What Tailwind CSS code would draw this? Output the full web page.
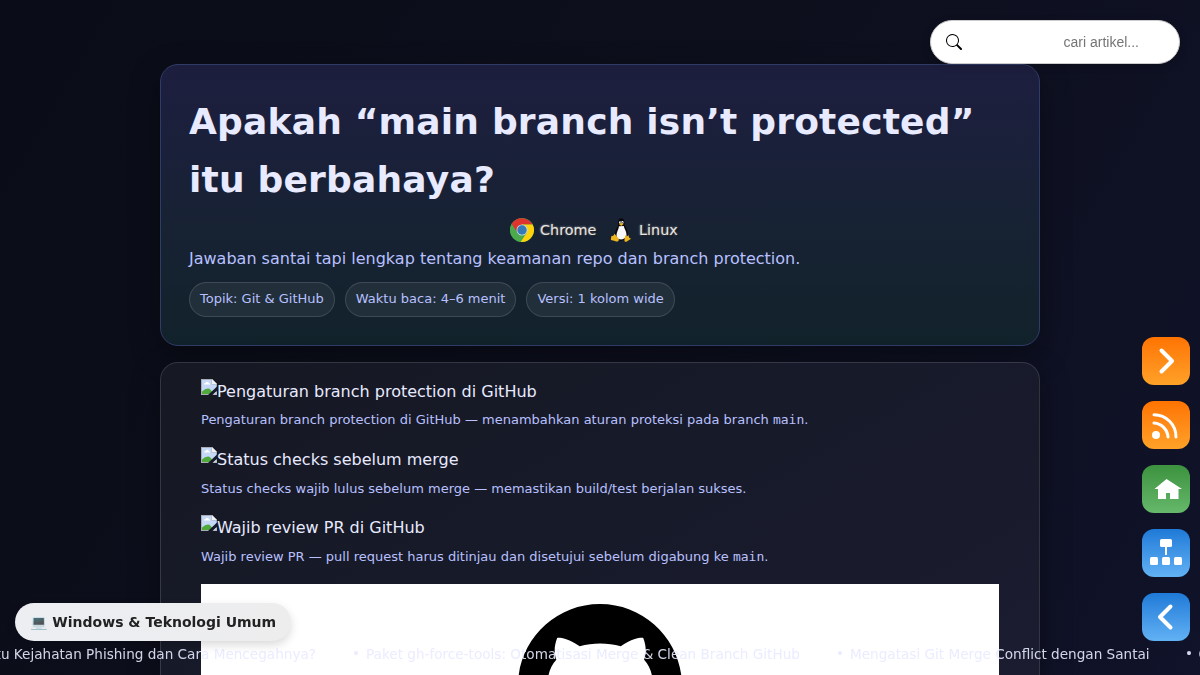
<!DOCTYPE html>
<html lang="id">
<head>
<meta charset="utf-8">
<title>Apakah “main branch isn’t protected” itu berbahaya?</title>
<script src="https://cdn.jsdelivr.net/npm/@tailwindcss/browser@4"></script>
</head>
<body class="h-[675px] overflow-hidden bg-[linear-gradient(120deg,#0a0d17_0%,#0d0f1d_50%,#101329_100%)] font-['DejaVu_Sans',sans-serif] text-base leading-[25.6px] text-[#e8eaff]">
<svg class="hidden">
  <defs>
    <symbol id="broken" viewBox="0 0 16 16">
      <path d="M0 0H11L16 5V16H0Z" fill="#a9adb5"/>
      <path d="M1 1H10.5V5.5H15V15H1Z" fill="#c5d9f7"/>
      <path d="M11 0L16 5H11Z" fill="#f1f2f4"/>
      <path d="M3 5.5q0-1.5 1.5-1.5q.5-1.5 2-1.2q1.300 .2 1.300 1.400q1.200 0 1.200 1.300z" fill="#fff"/>
      <path d="M1 15v-2.500q3-3 6-3q3 0 5 5.500z" fill="#4fa93b"/>
      <path d="M16 7.500L7 16h4.500L16 12z" fill="#171a29"/>
      <path d="M12 15.500l3.500-3.300v3.300z" fill="#c9ced6"/>
    </symbol>
  </defs>
</svg>
<main class="mx-auto flex h-[675px] w-[880px] flex-col gap-4 overflow-visible pt-16">
  <header class="h-[282px] shrink-0 rounded-[18px] border border-[#303c68] bg-[linear-gradient(180deg,#1d1e3e_0%,#1a203a_30%,#172233_58%,#12222b_100%)] p-7 shadow-[0_10px_30px_rgba(0,0,0,0.35)]">
    <h1 class="text-[36px] leading-[57.6px] font-bold tracking-[0.2px]">Apakah “main branch isn’t protected” itu berbahaya?</h1>
    <div class="mt-[10px] flex h-6 items-center pl-[321px] text-[14.4px] text-[#e4e4e4] [text-shadow:1px_1px_2px_#000,0_0_2px_#ddd]">
      <svg class="mr-1.5 size-6" viewBox="0 0 24 24">
        <circle cx="12" cy="12" r="12" fill="#46a348"/>
        <path d="M12 12L1.600 6A12 12 0 0 1 22.400 6.500L12 6.500Z" fill="#dd342d"/>
        <path d="M12 6.500H22.600A12 12 0 0 1 10.500 23.900L16.800 14.700Z" fill="#fed30c"/>
        <path d="M1.600 6L7.200 14.800L12 12V6.500Z" fill="#dd342d"/>
        <path d="M1.600 6L7.200 14.800L9 17L14.500 16.500L10.500 23.900A12 12 0 0 1 1.600 6" fill="#4aaa4c"/>
        <circle cx="12" cy="12" r="5.500" fill="#c9d9e3"/>
        <circle cx="12" cy="12" r="4.700" fill="#347ab7"/>
      </svg>
      <span class="w-[57px] pt-0.5">Chrome</span>
      <svg class="mr-1.5 ml-[12px] size-6" viewBox="0 0 24 24">
        <path d="M12.300.3C10 .3 9 2 9.200 4.400C9.400 7.500 8.600 8.500 7.300 11C6 13.500 5.500 17 6.500 19.500L12 23L17.500 20C20 16 18.500 12 16.300 8.500C15 6.500 15.500 5.500 15.300 3.500C15 1.300 14 .3 12.300.3Z" fill="#090909"/>
        <path d="M9.900 8.200L14.800 8C15.300 11 17.800 13 17.500 18C16 22 9.500 22.500 8 19.500C6.400 15 9.700 12 9.900 8.200Z" fill="#f8f8f8"/>
        <ellipse cx="11" cy="4.400" rx=".9" ry="1.200" fill="#fff"/><ellipse cx="13.400" cy="4.400" rx="1.100" ry="1.300" fill="#fff"/>
        <circle cx="11.200" cy="4.600" r=".45"/><circle cx="13.200" cy="4.600" r=".5"/>
        <path d="M10 6L12 5.100L14.600 6L12.200 7.900Z" fill="#f2b718"/>
        <path d="M5.600 15.700L9.800 21C10 24 7.800 24 6 23.100L2 22.100C1.600 21 2.400 20 2.200 18.300L4.300 17.700Z" fill="#efb51d"/>
        <path d="M16.200 17C17 18.600 18.700 18.500 19.500 17.100L20 19.500L22 20.700L17.500 23.700C15.300 24.200 15.200 22.500 15.700 20.500Z" fill="#efb51d"/>
      </svg>
      <span class="pt-0.5">Linux</span>
    </div>
    <p class="mt-[4px] text-[#b8c0ff]">Jawaban santai tapi lengkap tentang keamanan repo dan branch protection.</p>
    <div class="mt-[10px] flex gap-[10px] text-[13px] leading-[20.8px] text-[#b8c0ff]">
      <span class="h-[35px] rounded-full border border-white/13 bg-white/6 px-[10px] pt-[6px]">Topik: Git &amp; GitHub</span>
      <span class="h-[35px] rounded-full border border-white/13 bg-white/6 px-[10px] pt-[6px]">Waktu baca: 4–6 menit</span>
      <span class="h-[35px] rounded-full border border-white/13 bg-white/6 px-[10px] pt-[6px]">Versi: 1 kolom wide</span>
    </div>
  </header>
  <article class="h-[313px] shrink-0 rounded-t-[18px] border border-b-0 border-white/12 bg-[linear-gradient(150deg,#161823_0%,#171a29_50%,#1b1c30_100%)] px-10 pt-4 shadow-[0_10px_30px_rgba(0,0,0,0.35)]">
    <figure class="h-[68px]">
      <div class="flex"><svg class="size-4"><use href="#broken"/></svg><span>Pengaturan branch protection di GitHub</span></div>
      <figcaption class="mt-[5px] text-[13px] leading-[20.8px] text-[#b8c0ff]">Pengaturan branch protection di GitHub — menambahkan aturan proteksi pada branch <code class="font-['DejaVu_Sans_Mono',monospace]">main</code>.</figcaption>
    </figure>
    <figure class="h-[68px]">
      <div class="flex"><svg class="size-4"><use href="#broken"/></svg><span>Status checks sebelum merge</span></div>
      <figcaption class="mt-[6px] text-[13px] leading-[20.8px] text-[#b8c0ff]">Status checks wajib lulus sebelum merge — memastikan build/test berjalan sukses.</figcaption>
    </figure>
    <figure class="h-[69px]">
      <div class="flex"><svg class="size-4"><use href="#broken"/></svg><span>Wajib review PR di GitHub</span></div>
      <figcaption class="mt-[6px] text-[13px] leading-[20.8px] text-[#b8c0ff]">Wajib review PR — pull request harus ditinjau dan disetujui sebelum digabung ke <code class="font-['DejaVu_Sans_Mono',monospace]">main</code>.</figcaption>
    </figure>
    <div class="flex h-[91px] justify-center overflow-hidden bg-white pt-5">
      <svg class="size-[164px] shrink-0" viewBox="0 0 16 16"><path d="M8 0C3.580 0 0 3.580 0 8c0 3.540 2.290 6.530 5.470 7.590.4.070.550-.170.550-.380 0-.190-.010-.820-.010-1.490-2.010.370-2.530-.490-2.690-.940-.090-.230-.480-.940-.820-1.130-.280-.150-.680-.520-.010-.530.630-.010 1.080.580 1.230.820.720 1.210 1.870.870 2.330.660.070-.520.280-.870.510-1.070-1.780-.2-3.640-.890-3.640-3.950 0-.870.310-1.590.820-2.150-.080-.2-.360-1.020.080-2.120 0 0 .670-.210 2.200.820.640-.180 1.320-.270 2-.270s1.360.090 2 .270c1.530-1.040 2.200-.820 2.200-.820.440 1.100.160 1.920.080 2.120.510.560.820 1.270.820 2.150 0 3.070-1.870 3.750-3.650 3.950.290.250.540.730.540 1.480 0 1.070-.010 1.930-.010 2.200 0 .210.150.460.550.380A8 8 0 0 0 16 8c0-4.420-3.580-8-8-8z"/></svg>
    </div>
  </article>
</main>

<label class="fixed top-5 right-5 flex h-11 w-[250px] items-center rounded-full border border-[#ccc] bg-white pl-[15px] shadow-[0_2px_8px_rgba(0,0,0,0.2)]">
  <svg class="size-4" viewBox="0 0 16 16"><path d="M11.742 10.344a6.500 6.500 0 1 0-1.397 1.398h-.001q.044.060.098.115l3.850 3.850a1 1 0 0 0 1.415-1.414l-3.850-3.850a1 1 0 0 0-.115-.1zM12 6.500a5.500 5.500 0 1 1-11 0 5.500 5.500 0 0 1 11 0"/></svg>
  <span class="ml-[101.500px] font-['Liberation_Sans',sans-serif] text-sm text-[#757575]">cari artikel...</span>
</label>

<nav class="fixed top-[337px] right-[10px] flex flex-col gap-4">
  <a class="size-12 rounded-xl bg-linear-to-b from-[#ff7300] to-[#ffa126]"><svg viewBox="0 0 48 48"><path d="M19.500 13.500L30 24L19.500 34.500" fill="none" stroke="#fff" stroke-width="4" stroke-linecap="round" stroke-linejoin="round"/></svg></a>
  <a class="size-12 rounded-xl bg-linear-to-b from-[#ff7300] to-[#ffa126]"><svg viewBox="0 0 48 48"><circle cx="14" cy="34" r="4" fill="#fff"/><path d="M12 22A15 15 0 0 1 26 36M12 13.800A22 22 0 0 1 34 36" fill="none" stroke="#fff" stroke-width="3" stroke-linecap="round"/></svg></a>
  <a class="size-12 rounded-xl bg-linear-to-b from-[#3c923f] to-[#66b86a]"><svg viewBox="0 0 48 48"><path d="M24.500 14L40 24H36.500V34H28V28H24V34H16V24H12.500Z" fill="#fff"/></svg></a>
  <a class="size-12 rounded-xl bg-linear-to-b from-[#1d7ad7] to-[#61b1f4]"><svg viewBox="0 0 48 48" fill="#fff"><rect x="18" y="10" width="12" height="8" rx="1.500"/><path d="M23 17h2v9h-2z"/><rect x="8" y="28" width="8" height="8" rx="1.500"/><rect x="20" y="28" width="8" height="8" rx="1.500"/><rect x="32" y="28" width="8" height="8" rx="1.500"/></svg></a>
  <a class="size-12 rounded-xl bg-linear-to-b from-[#1d7ad7] to-[#61b1f4]"><svg viewBox="0 0 48 48"><path d="M28.500 13.500L18 24L28.500 34.500" fill="none" stroke="#fff" stroke-width="4" stroke-linecap="round" stroke-linejoin="round"/></svg></a>
</nav>

<div class="fixed top-[641px] left-0 h-[26px] w-[1200px] overflow-hidden text-[13.6px] leading-[26px] whitespace-nowrap text-[#e8eaff]/90">
  <span class="absolute right-[884px]">Apa Itu Kejahatan Phishing dan Cara Mencegahnya?</span>
  <span class="absolute left-[352px] top-[-1px]">•</span><span class="absolute left-[366px]">Paket gh-force-tools: Otomatisasi Merge &amp; Clean Branch GitHub</span>
  <span class="absolute left-[836px] top-[-1px]">•</span><span class="absolute left-[850px]">Mengatasi Git Merge Conflict dengan Santai</span>
  <span class="absolute left-[1185px] top-[-1px]">•</span><span class="absolute left-[1198.500px]">Cara</span>
</div>

<div class="fixed top-[603px] left-[15px] flex h-[38px] w-[276px] items-center rounded-full bg-[#eceef2] bg-linear-to-r from-[#eceef2] to-[#ededee] pl-[15px] text-sm font-bold text-[#222] shadow-[0_4px_10px_rgba(0,0,0,0.15)]"><span class="whitespace-nowrap"><span class="mr-[0.500px] opacity-90">💻</span> Windows &amp; Teknologi Umum</span></div>
</body>
</html>
